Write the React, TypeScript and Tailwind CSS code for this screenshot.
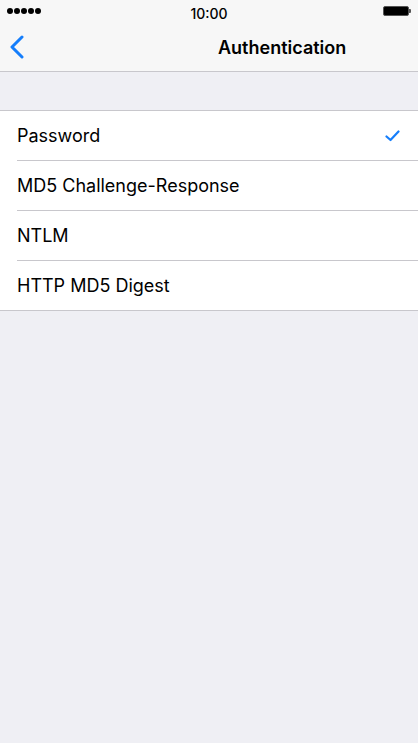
const font = { fontFamily: 'Inter, "Liberation Sans", Arial, sans-serif' };

const options = ["Password", "MD5 Challenge-Response", "NTLM", "HTTP MD5 Digest"];

function StatusBar() {
  return (
    <div className="relative flex h-[22px] items-center px-[7px]">
      <div className="flex gap-[1px]">
        {[0, 1, 2, 3, 4].map((i) => (
          <span key={i} className="h-[6px] w-[6px] rounded-full bg-black" />
        ))}
      </div>
      <span className="absolute left-1/2 top-[3px] -translate-x-1/2 text-[14px] font-medium text-black">
        10:00
      </span>
      <div className="ml-auto flex items-center pr-[0px]">
        <div className="h-[10px] w-[26px] rounded-[2px] border border-[#555] bg-black" />
        <div className="h-[4px] w-[2px] rounded-r-[1px] bg-[#555]" />
      </div>
    </div>
  );
}

function NavBar() {
  return (
    <div className="flex h-[50px] items-center border-b border-[#c8c7cc] bg-[#f7f7f7]">
      <svg width="16" height="24" viewBox="0 0 16 24" className="ml-[9px]">
        <path d="M13 2 L3 12 L13 22" fill="none" stroke="#157efb" strokeWidth="3" strokeLinecap="round" strokeLinejoin="round" />
      </svg>
      <span className="ml-[193px] mt-[2px] text-[18px] font-semibold text-black">Authentication</span>
    </div>
  );
}

export default function App() {
  return (
    <div className="flex h-[743px] w-[418px] flex-col bg-[#efeff4]" style={font}>
      <div className="bg-[#f7f7f7]">
        <StatusBar />
        <NavBar />
      </div>
      <div className="mt-[38px] border-y border-[#c8c7cc] bg-white">
        {options.map((label, i) => (
          <div key={label} className="pl-[17px]">
            <div
              className={
                i === options.length - 1
                  ? "flex h-[49px] items-center pr-[18px]"
                  : "flex h-[50px] items-center border-b border-[#c8c7cc] pr-[18px]"
              }
            >
              <span className="text-[18px] text-black">{label}</span>
              {i === 0 && (
                <svg width="15" height="12" viewBox="0 0 15 12" className="ml-auto">
                  <path d="M1.5 6.5 L5.5 10 L13.5 1.5" fill="none" stroke="#157efb" strokeWidth="2.2" strokeLinecap="round" strokeLinejoin="round" />
                </svg>
              )}
            </div>
          </div>
        ))}
      </div>
    </div>
  );
}
